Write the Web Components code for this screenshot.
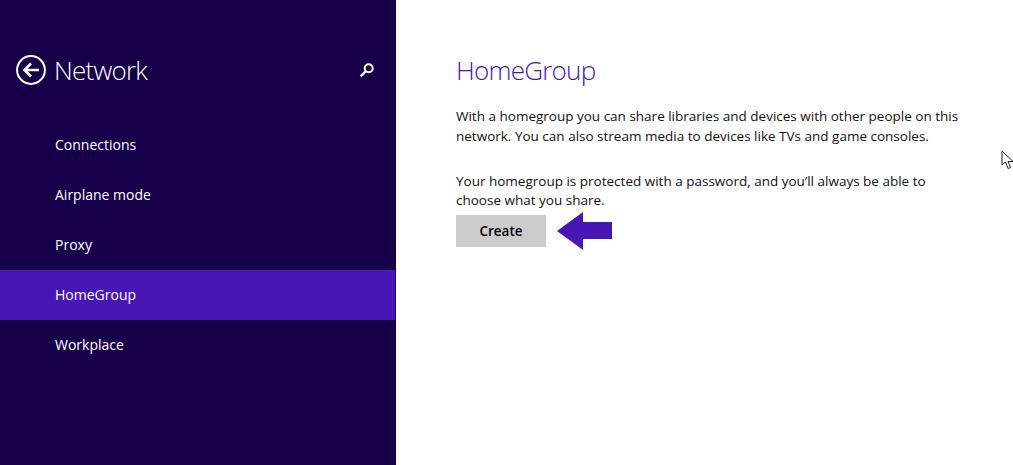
<!DOCTYPE html>
<html>
<head>
<meta charset="utf-8">
<style>
  html, body { margin: 0; height: 100%; }
  body { font-family: "Open Sans", "Noto Sans", sans-serif; overflow: hidden; }
</style>
</head>
<body>
<settings-page>
  <settings-nav title-text="Network" slot="nav">
    <nav-item>Connections</nav-item>
    <nav-item>Airplane mode</nav-item>
    <nav-item>Proxy</nav-item>
    <nav-item selected>HomeGroup</nav-item>
    <nav-item>Workplace</nav-item>
  </settings-nav>
  <home-group slot="main"></home-group>
</settings-page>

<script>
class SettingsPage extends HTMLElement {
  constructor() {
    super();
    this.attachShadow({ mode: "open" });
    this.shadowRoot.innerHTML = `
    <style>
      :host {
        display: grid;
        grid-template-columns: 396px 1fr;
        height: 465px;
        background: #fff;
      }
    </style>
    <slot name="nav"></slot>
    <slot name="main"></slot>`;
  }
}

class SettingsNav extends HTMLElement {
  constructor() {
    super();
    this.attachShadow({ mode: "open" });
  }

  connectedCallback() {
    const title = this.getAttribute("title-text");
    this.shadowRoot.innerHTML = `
    <style>
      :host {
        display: block;
        background: #16004a;
        color: #fff;
      }

      header {
        display: flex;
        align-items: center;
        height: 120px;
        box-sizing: border-box;
        padding: 20px 21px 0 16px;
      }

      .back {
        width: 30px;
        height: 30px;
        margin-right: 8px;
      }

      h1 {
        flex: 1;
        margin: 0;
        font-size: 26px;
        font-weight: 300;
        letter-spacing: -0.77px;
      }

      .search {
        width: 16px;
        height: 16px;
      }

      .items {
        padding-right: 1px;
      }
    </style>
    <header>
      <svg class="back" viewBox="0 0 30 30" fill="none" stroke="#fff">
        <circle cx="15" cy="15" r="13.9" stroke-width="2"/>
        <path d="M23 15H9M15 8.5L8.5 15L15 21.5" stroke-width="2.6"/>
      </svg>
      <h1>${title}</h1>
      <svg class="search" viewBox="0 0 16 16" fill="none" stroke="#fff">
        <circle cx="9.7" cy="6.2" r="4" stroke-width="2"/>
        <path d="M6.8 9.2L1.6 14.4" stroke-width="2.4"/>
      </svg>
    </header>
    <div class="items"><slot></slot></div>`;
  }
}

class NavItem extends HTMLElement {
  constructor() {
    super();
    this.attachShadow({ mode: "open" });
    this.shadowRoot.innerHTML = `
    <style>
      :host {
        display: flex;
        align-items: center;
        height: 48px;
        padding: 0 0 2px 55px;
        font-size: 14px;
        color: #fff;
      }

      :host([selected]) {
        background: #4617b4;
      }
    </style>
    <slot></slot>`;
  }
}

class HomeGroup extends HTMLElement {
  constructor() {
    super();
    this.attachShadow({ mode: "open" });
    this.shadowRoot.innerHTML = `
    <style>
      :host {
        display: block;
        position: relative;
        padding: 52px 0 0 60px;
        color: #111;
        font-size: 13.5px;
        line-height: 20px;
      }

      h2 {
        margin: 0 0 18px;
        color: #4617b4;
        font-size: 26px;
        font-weight: 300;
        line-height: 36px;
        letter-spacing: -0.75px;
      }

      p {
        margin: 0;
        width: 510px;
      }

      p + p {
        margin-top: 26px;
        line-height: 19px;
      }

      .action {
        display: flex;
        align-items: center;
        margin-top: 2px;
      }

      button {
        width: 90px;
        height: 32px;
        border: 0;
        padding: 0;
        background: #ccc;
        color: #000;
        font: 600 13.5px "Open Sans", "Noto Sans", sans-serif;
      }

      .arrow {
        width: 56px;
        height: 38px;
        margin-left: 11px;
      }

      .cursor {
        position: absolute;
        left: 605px;
        top: 150px;
        width: 14px;
        height: 20px;
      }
    </style>
    <h2>HomeGroup</h2>
    <p>With a homegroup you can share libraries and devices with other people on this network. You can also stream media to devices like TVs and game consoles.</p>
    <p>Your homegroup is protected with a password, and you’ll always be able to choose what you share.</p>
    <div class="action">
      <button>Create</button>
      <svg class="arrow" viewBox="0 0 56 38"><path d="M0 19L26 0V10H55V27H26V38Z" fill="#4617b4"/></svg>
    </div>
    <svg class="cursor" viewBox="0 0 14 20"><path d="M1 1V15L4.5 12L7 18.5L9.5 17.5L7 11.5H12Z" fill="#fff" stroke="#222" stroke-width="1"/></svg>`;
  }
}

customElements.define("settings-page", SettingsPage);
customElements.define("settings-nav", SettingsNav);
customElements.define("nav-item", NavItem);
customElements.define("home-group", HomeGroup);
</script>
</body>
</html>
